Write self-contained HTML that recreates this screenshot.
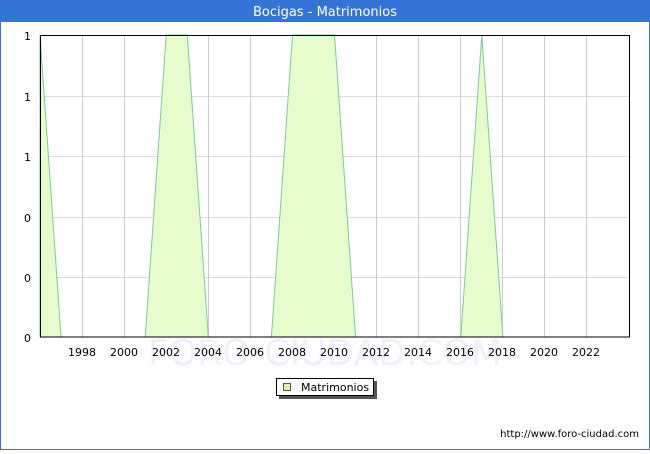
<!DOCTYPE html>
<html><head><style>
body{margin:0;width:650px;height:450px;overflow:hidden;font-family:"DejaVu Sans","Liberation Sans",sans-serif;}
</style></head><body>
<svg width="650" height="450" xmlns="http://www.w3.org/2000/svg" font-family="DejaVu Sans, Liberation Sans, sans-serif">
<rect x="0" y="0" width="650" height="450" fill="#3374d6"/>
<rect x="1" y="22" width="648" height="427" fill="#fff"/>
<text x="325" y="16" fill="#fff" font-size="13" text-anchor="middle">Bocigas - Matrimonios</text>
<text x="325" y="365" fill="#eef0fa" font-size="36" text-anchor="middle">FORO-CIUDAD.COM</text>
<g stroke="#dcdcdc" stroke-width="1">
<line x1="40" y1="96.5" x2="630" y2="96.5"/><line x1="40" y1="156.5" x2="630" y2="156.5"/>
<line x1="40" y1="217.5" x2="630" y2="217.5"/><line x1="40" y1="277.5" x2="630" y2="277.5"/>
</g>
<g stroke="#cccccc" stroke-width="1">
<line x1="82.5" y1="35" x2="82.5" y2="337"/><line x1="124.5" y1="35" x2="124.5" y2="337"/>
<line x1="166.5" y1="35" x2="166.5" y2="337"/><line x1="208.5" y1="35" x2="208.5" y2="337"/>
<line x1="250.5" y1="35" x2="250.5" y2="337"/><line x1="292.5" y1="35" x2="292.5" y2="337"/>
<line x1="334.5" y1="35" x2="334.5" y2="337"/><line x1="376.5" y1="35" x2="376.5" y2="337"/>
<line x1="418.5" y1="35" x2="418.5" y2="337"/><line x1="460.5" y1="35" x2="460.5" y2="337"/>
<line x1="502.5" y1="35" x2="502.5" y2="337"/><line x1="544.5" y1="35" x2="544.5" y2="337"/>
<line x1="586.5" y1="35" x2="586.5" y2="337"/>
</g>
<g fill="#e6fccc" stroke="#7fc99a" stroke-width="1">
<polygon points="40,35 61,337 40,337"/>
<polygon points="145.2,337 166.2,35 187.3,35 208.3,337"/>
<polygon points="271.4,337 292.5,35 334.5,35 355.6,337"/>
<polygon points="460.8,337 481.8,35 502.9,337"/>
</g>
<rect x="40.5" y="35.5" width="589" height="301.5" fill="none" stroke="#000" stroke-width="1"/>
<g font-size="11" fill="#000" text-anchor="end">
<text x="31" y="40">1</text><text x="31" y="101">1</text><text x="31" y="161">1</text>
<text x="31" y="222">0</text><text x="31" y="282">0</text><text x="31" y="342">0</text>
</g>
<g font-size="11" fill="#000" text-anchor="middle">
<text x="82" y="356">1998</text><text x="124" y="356">2000</text><text x="166" y="356">2002</text>
<text x="208" y="356">2004</text><text x="250" y="356">2006</text><text x="292" y="356">2008</text>
<text x="334" y="356">2010</text><text x="376" y="356">2012</text><text x="418" y="356">2014</text>
<text x="460" y="356">2016</text><text x="502" y="356">2018</text><text x="544" y="356">2020</text>
<text x="586" y="356">2022</text>
</g>
<rect x="279" y="381" width="98" height="18" fill="#555"/>
<rect x="276.5" y="378.5" width="97" height="17" fill="#fff" stroke="#000"/>
<rect x="283.5" y="383.5" width="7" height="7" fill="#d8f8b0" stroke="#555"/>
<text x="301" y="391" font-size="11">Matrimonios</text>
<text x="639" y="437" font-size="10" text-anchor="end">http://www.foro-ciudad.com</text>
</svg>
</body></html>
